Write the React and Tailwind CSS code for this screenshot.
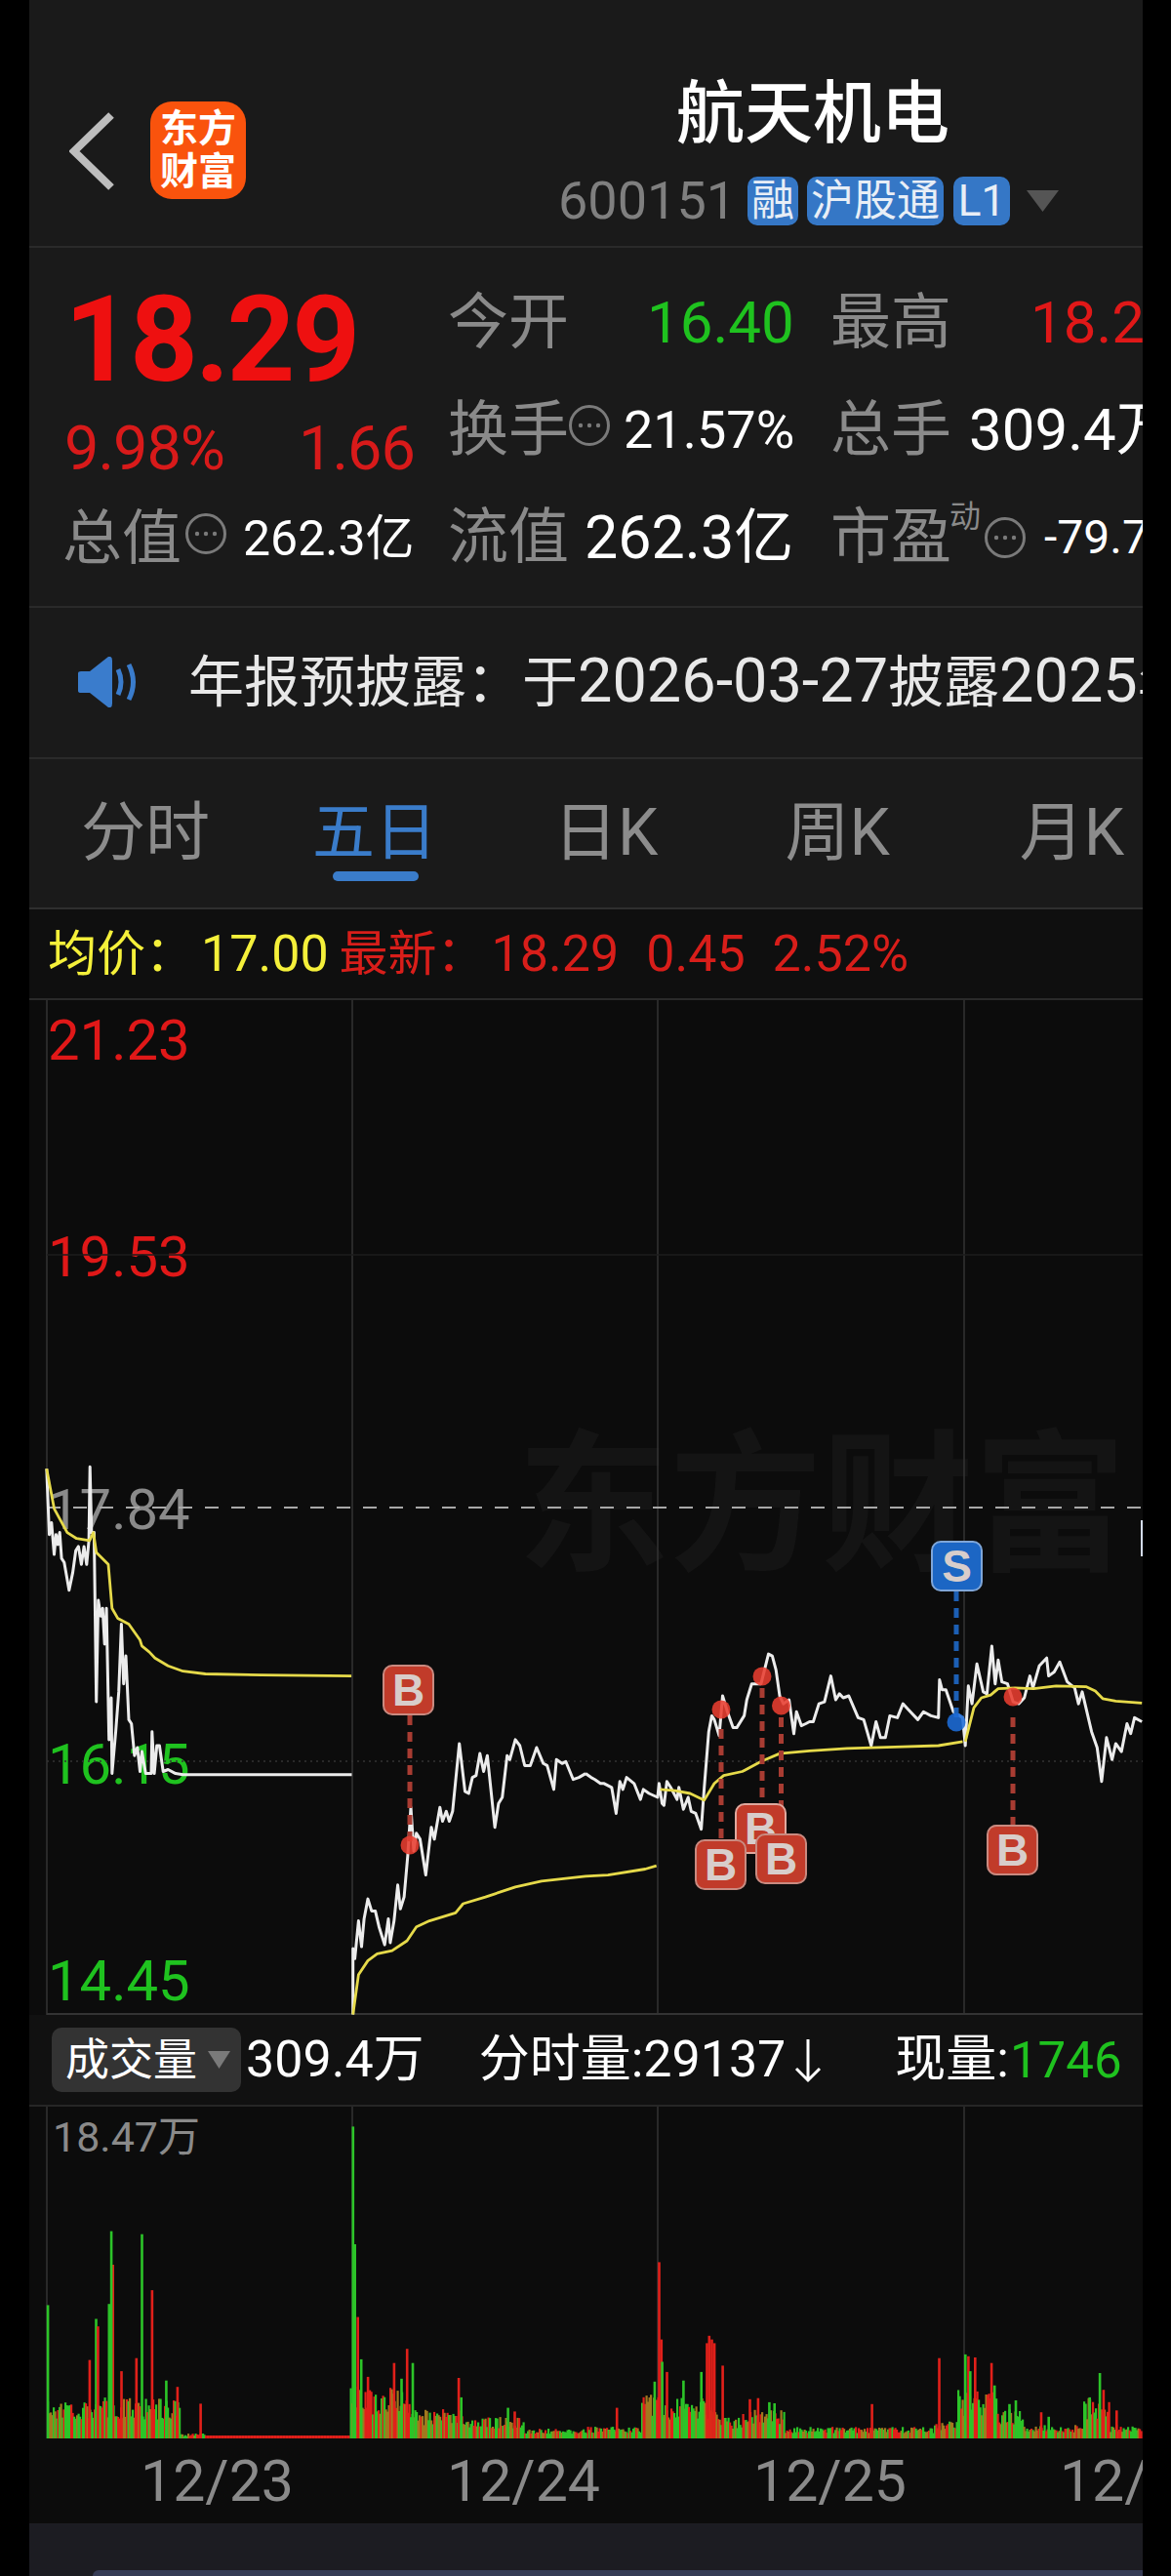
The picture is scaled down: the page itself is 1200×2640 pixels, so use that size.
const z3 = (pts) => pts.map(([x, y]) => `${(x / 2.613).toFixed(1)},${(1440 + y / 2.45).toFixed(1)}`).join(" ");
const z4 = (pts) => pts.map(([x, y]) => `${(600 + x / 2.613).toFixed(1)},${(1440 + y / 2.45).toFixed(1)}`).join(" ");

const white1 = z3([[125,160],[132,325],[138,295],[145,375],[150,325],[155,350],[160,320],[165,385],[172,395],[185,465],[195,420],[203,365],[210,355],[218,400],[225,355],[232,400],[238,340],[241,155],[245,320],[252,320],[258,745],[263,490],[270,530],[275,510],[280,600],[285,510],[292,840],[298,735],[300,925],[310,820],[318,720],[325,550],[331,700],[337,630],[345,790],[352,800],[360,880],[368,860],[375,920],[380,870],[390,925],[405,925],[407,820],[413,925],[420,855],[427,855],[437,920],[450,915],[470,925],[490,928],[942,928]]);
const white2 = z3([[945,1530],[945,1365],[950,1390],[960,1295],[968,1360],[975,1290],[985,1240],[995,1270],[1005,1270],[1015,1310],[1030,1355],[1040,1290],[1045,1350],[1055,1295],[1065,1205],[1072,1265],[1082,1235],[1092,1130],[1100,1010],[1108,1120],[1115,1075],[1125,1090],[1140,1180],[1155,1060],[1163,1090],[1178,1010],[1185,1045],[1195,1020],[1203,1045],[1212,1020],[1230,850],[1245,970],[1255,975],[1265,935],[1275,930],[1285,875],[1295,920],[1305,880],[1325,1060],[1335,1000],[1345,985],[1358,880],[1365,890],[1380,840],[1392,855],[1405,905],[1420,905],[1437,860],[1455,900],[1465,905],[1483,965],[1490,890],[1505,900],[1515,895],[1535,940],[1550,935],[1568,925]]);
const white3 = z4([[0,925],[15,935],[25,940],[40,950],[50,950],[70,960],[82,1025],[92,945],[100,965],[110,935],[130,950],[147,990],[155,965],[170,975],[193,985],[197,950],[205,1000],[210,1005],[218,945],[228,960],[245,990],[250,960],[262,1015],[275,985],[283,1020],[295,1025],[310,1065],[318,960],[330,820],[338,780],[345,790],[358,830],[367,730],[380,770],[395,810],[405,810],[425,780],[432,740],[445,700],[470,700],[490,625],[500,630],[510,665],[520,730],[530,750],[545,740],[558,825],[565,770],[578,805],[590,800],[600,795],[610,795],[625,750],[640,745],[657,680],[670,740],[680,725],[690,735],[705,730],[730,785],[745,790],[765,855],[778,795],[790,835],[803,835],[815,780],[835,785],[850,750],[865,765],[890,790],[905,770],[925,780],[945,785],[948,690],[955,715],[965,715],[985,770],[1010,785],[1017,855],[1025,705],[1035,750],[1048,650],[1065,720],[1075,725],[1088,605],[1097,700],[1105,640],[1115,695],[1130,700],[1145,745],[1160,750],[1175,735],[1190,680],[1198,710],[1215,655],[1235,635],[1240,680],[1255,670],[1270,645],[1290,695],[1310,710],[1320,750],[1330,720],[1355,820],[1370,860],[1382,945],[1395,835],[1410,890],[1420,850],[1435,870],[1450,800],[1460,825],[1470,785],[1490,795]]);

const yellowLines = [
  z3([[125,160],[145,260],[180,320],[205,335],[240,340],[250,320],[258,370],[290,400],[300,510],[315,535],[345,550],[375,590],[380,605],[400,620],[415,635],[450,655],[490,668],[550,675],[700,678],[941,680]]),
  z3([[945,1530],[960,1430],[985,1395],[1010,1378],[1050,1370],[1090,1345],[1115,1310],[1150,1295],[1220,1275],[1240,1252],[1300,1235],[1380,1210],[1450,1195],[1568,1183]]),
  z4([[0,1183],[60,1180],[160,1165],[190,1157]]),
  z4([[200,965],[240,968],[280,975],[318,992],[345,950],[370,930],[420,920],[470,895],[520,875],[600,868],[700,862],[850,858],[945,855],[1010,845]]),
  z4([[1017,845],[1040,760],[1060,735],[1085,728],[1105,712],[1150,710],[1200,712],[1260,705],[1340,707],[1365,718],[1385,737],[1420,743],[1490,748]]),
];

const GREEN = "#2cc428";
const RED = "#e2201a";
const OLIVE = "#a2781e";
const BASE = 2499;
const envelope = [[184,42],[210,5],[358,3],[420,54],[474,30],[536,22],[600,10],[657,12],[684,46],[734,42],[760,22],[803,30],[956,12],[980,18],[1021,50],[1048,30],[1109,14],[1136,42],[1171,14]];
const spikes5 = [["g",128,843],["r",302,735],["g",298,645],["g",292,840],["g",257,880],["r",262,900],["g",380,653],["r",407,803],["r",240,990],["r",365,985],["r",325,1020],["g",445,1045],["r",475,1062],["r",537,1107],["g",945,365],["g",950,680],["r",958,875],["g",967,988],["r",985,1035],["r",1055,998],["r",1090,960],["g",1105,998],["g",1075,1040],["r",1228,1038],["g",1235,1090],["g",1360,1118],["r",1378,1128]];
const spikes6 = [["r",197,728],["r",203,935],["g",205,995],["g",185,1048],["r",218,1022],["g",262,1045],["g",310,1022],["r",325,945],["r",331,925],["r",338,935],["r",345,945],["r",367,1005],["r",84,1118],["r",440,1095],["r",462,1092],["g",492,1103],["g",506,1106],["r",767,1108],["r",947,985],["g",1017,975],["r",1025,980],["r",1043,983],["g",1030,1020],["r",1087,998],["g",1095,1058],["g",1135,1108],["g",1152,1098],["r",1220,1130],["g",1240,1142],["g",1350,1090],["g",1377,1025],["r",1387,1070],["r",1422,1125]];

function buildBars() {
  let seed = 17;
  const rnd = () => {
    seed = (seed * 1664525 + 1013904223) % 4294967296;
    return seed / 4294967296;
  };
  const bars = [];
  for (let x = 48; x < 1170; x += 1.5) {
    const e = envelope.find((p) => x < p[0]) || envelope[envelope.length - 1];
    if (x >= 210 && x < 358) {
      bars.push({ x, h: 3, c: RED, w: 1.8 });
      continue;
    }
    const r = rnd();
    bars.push({ x, h: e[1] * (0.45 + 0.55 * rnd()), c: r < 0.42 ? GREEN : r < 0.72 ? OLIVE : RED, w: 2.2 });
  }
  spikes5.forEach(([k, zx, top]) => bars.push({ x: zx / 2.613 - 1.2, h: (1200 - top) / 2.613, c: k === "g" ? GREEN : RED, w: 2.6 }));
  spikes6.forEach(([k, zx, top]) => bars.push({ x: 600 + zx / 2.613 - 1.2, h: (1200 - top) / 2.613, c: k === "g" ? GREEN : RED, w: 2.6 }));
  return bars;
}
const bars = buildBars();

function MoreIcon({ className }) {
  return (
    <svg viewBox="0 0 44 44" className={className} fill="none">
      <circle cx="22" cy="22" r="19.5" stroke="#7a7a7a" strokeWidth="3" />
      <circle cx="13" cy="22" r="2.2" fill="#7a7a7a" />
      <circle cx="22" cy="22" r="2.2" fill="#7a7a7a" />
      <circle cx="31" cy="22" r="2.2" fill="#7a7a7a" />
    </svg>
  );
}

function Tag({ className, children }) {
  return (
    <div className={`h-[50px] rounded-[10px] bg-[#3577c6] text-[#e8eef6] text-[44px] leading-none flex items-center justify-center ${className}`}>
      {children}
    </div>
  );
}

function Header() {
  return (
    <div className="h-[252px] flex items-start border-b-2 border-[#2a2a2a] box-content">
      <svg viewBox="0 0 46 80" className="w-[46px] h-[80px] ml-[41px] mt-[115px]" fill="none">
        <path d="M43 3 L5 40 L43 77" stroke="#bdbdbd" strokeWidth="8" />
      </svg>
      <div className="w-[98px] h-[100px] ml-[37px] mt-[104px] rounded-[22px] bg-[#f9530d] flex flex-col items-center justify-center text-white text-[39px] leading-[44px] font-bold">
        <span>东方</span>
        <span>财富</span>
      </div>
      <div className="ml-[322px] pt-[83px] flex flex-col">
        <div className="ml-[119px] text-[70px] leading-[68px] text-white font-medium whitespace-nowrap">航天机电</div>
        <div className="mt-[28px] flex items-center">
          <span className="w-[176px] text-[54px] leading-none text-[#7f7f7f] -ml-[2px]">600151</span>
          <Tag className="ml-[18px] w-[52px]">融</Tag>
          <Tag className="ml-[9px] w-[140px]">沪股通</Tag>
          <Tag className="ml-[10px] w-[58px]">L1</Tag>
          <svg viewBox="0 0 33 22" className="w-[33px] h-[22px] ml-[17px]">
            <path d="M0 0 H33 L16.5 22 Z" fill="#555" />
          </svg>
        </div>
      </div>
    </div>
  );
}

function Stats() {
  const label = "text-[62px] leading-none text-[#8a8a8a] w-[120px] shrink-0 whitespace-nowrap";
  const row = "h-[110px] flex items-center whitespace-nowrap";
  return (
    <div className="h-[367px] flex border-b-2 border-[#2a2a2a] box-content overflow-hidden">
      <div className="w-[429px] shrink-0 flex flex-col pl-[36px]">
        <div className="mt-[32px] h-[126px] flex items-center text-[122px] leading-none font-bold text-[#ee1010] tracking-[-3px]">18.29</div>
        <div className="mt-[17px] h-[60px] flex items-center text-[63px] leading-none text-[#d81a1a] tracking-[-1px]">
          <span className="w-[240px]">9.98%</span>
          <span>1.66</span>
        </div>
        <div className="mt-[33px] h-[60px] flex items-center whitespace-nowrap">
          <span className="text-[61px] leading-none text-[#8a8a8a] -ml-[2px]">总值</span>
          <MoreIcon className="w-[44px] h-[44px] ml-[3px] -mt-[10px]" />
          <span className="ml-[16px] text-[50px] leading-none text-white">262.3亿</span>
        </div>
      </div>
      <div className="w-[392px] shrink-0 pt-[22px]">
        <div className={row}>
          <span className={label}>今开</span>
          <span className="ml-[84px] w-[149px] text-right text-[60px] leading-none text-[#1fc21f]">16.40</span>
        </div>
        <div className={row}>
          <span className={label}>换手</span>
          <MoreIcon className="w-[44px] h-[44px] ml-[3px] -mt-[10px] shrink-0" />
          <span className="ml-[13px] text-[54px] leading-none text-white">21.57%</span>
        </div>
        <div className={row}>
          <span className={label}>流值</span>
          <span className="ml-[20px] text-[61px] leading-none text-white">262.3亿</span>
        </div>
      </div>
      <div className="flex-1 pt-[22px]">
        <div className={row}>
          <span className={label}>最高</span>
          <span className="ml-[85px] text-[60px] leading-none text-[#e01818]">18.29</span>
        </div>
        <div className={row}>
          <span className={label}>总手</span>
          <span className="ml-[22px] text-[60px] leading-none text-white">309.4万</span>
        </div>
        <div className={row}>
          <span className={label}>市盈</span>
          <span className="ml-[2px] -mt-[44px] text-[32px] leading-none text-[#8a8a8a]">动</span>
          <MoreIcon className="w-[44px] h-[44px] ml-[3px] shrink-0" />
          <span className="ml-[18px] text-[48px] leading-none text-white">-79.78</span>
        </div>
      </div>
    </div>
  );
}

function Notice() {
  return (
    <div className="h-[153px] flex items-center border-b-2 border-[#2a2a2a] box-content overflow-hidden whitespace-nowrap">
      <svg viewBox="0 0 63 52" className="ml-[50px] w-[63px] h-[52px] shrink-0 -mt-[2px]" fill="#3a7ccc">
        <path d="M0 17 Q0 15 3 15 H12 L31 0 Q35 -1 35 4 V48 Q35 53 31 52 L12 37 H3 Q0 37 0 35 Z" />
        <path d="M41 13 Q47 26 41 39" fill="none" stroke="#3a7ccc" strokeWidth="5" />
        <path d="M52 8 Q61 26 52 44" fill="none" stroke="#3a7ccc" strokeWidth="5" />
      </svg>
      <span className="ml-[50px] -mt-[4px] text-[57px] leading-none text-[#e8e8e8]">
        年报预披露：于<span className="text-[63px]">2026-03-27</span>披露<span className="text-[63px]">2025</span>年报
      </span>
    </div>
  );
}

function Tabs() {
  const tab = "text-[66px] leading-none text-[#8c8c8c] whitespace-nowrap";
  return (
    <div className="h-[152px] flex items-center border-b-2 border-[#2f2f2f] box-content overflow-hidden">
      <span className={`${tab} ml-[53px]`}>分时</span>
      <span className="ml-[105px] relative text-[64px] leading-none text-[#3a7cca] whitespace-nowrap">
        五日
        <span className="absolute left-[21px] top-[71px] w-[88px] h-[10px] rounded-full bg-[#3a7cca]"></span>
      </span>
      <span className={`${tab} ml-[119px]`}>日K</span>
      <span className={`${tab} ml-[130px]`}>周K</span>
      <span className={`${tab} ml-[133px]`}>月K</span>
    </div>
  );
}

function Legend() {
  const num = "text-[52px]";
  return (
    <div className="h-[91px] flex items-center bg-[#0f0f0f] border-b-2 border-[#2a2a2a] box-content text-[50px] leading-none whitespace-nowrap overflow-hidden">
      <span className="ml-[19px] text-[#f5f03a]">均价：</span>
      <span className={`ml-[7px] text-[#f5f03a] ${num}`}>17.00</span>
      <span className="ml-[11px] text-[#d81e1a]">最新：</span>
      <span className={`ml-[6px] text-[#d81e1a] ${num}`}>18.29</span>
      <span className={`ml-[28px] text-[#d81e1a] ${num}`}>0.45</span>
      <span className={`ml-[28px] text-[#d81e1a] ${num}`}>2.52%</span>
    </div>
  );
}

function Badge({ className, children }) {
  return (
    <div className={`absolute w-[53px] h-[52px] rounded-[10px] border-2 flex items-center justify-center text-[46px] leading-none font-bold text-[#d8cdcb] [font-family:'Liberation_Sans',sans-serif] ${className}`}>
      {children}
    </div>
  );
}

function PriceChart() {
  const grid = [48, 361, 674, 988];
  const axis = "absolute left-[19px] text-[58px] leading-none";
  const dashes = [
    [420, 1758, 1890, "#a83c32"],
    [739, 1772, 1890, "#a83c32"],
    [781, 1730, 1850, "#a83c32"],
    [800.5, 1760, 1855, "#a83c32"],
    [1038, 1760, 1870, "#a83c32"],
    [980, 1631, 1765, "#1c5fb4"],
  ];
  const dots = [
    [420, 1891, "#e83e30"],
    [739, 1752, "#e83e30"],
    [781, 1718, "#e83e30"],
    [800.5, 1748, "#e83e30"],
    [1038, 1739, "#e83e30"],
    [980, 1765, "#1c6cd8"],
  ];
  return (
    <div className="relative h-[1040px] bg-[#0c0c0c] overflow-hidden">
      <div className="absolute left-[500px] top-[441px] text-[156px] leading-none font-bold text-[#141414] whitespace-nowrap">东方财富</div>
      <div className={`${axis} top-[12px] text-[#e01818]`}>21.23</div>
      <div className={`${axis} top-[234px] text-[#e01818]`}>19.53</div>
      <div className={`${axis} top-[493px] text-[#8a8a8a]`}>17.84</div>
      <div className={`${axis} top-[754px] text-[#1fc21f]`}>16.15</div>
      <div className={`${axis} top-[976px] text-[#1fc21f]`}>14.45</div>
      <svg viewBox="30 1025 1141 1040" className="absolute inset-0 w-[1141px] h-[1040px]" fill="none">
        {grid.map((x) => (
          <line key={x} x1={x} x2={x} y1="1025" y2="2065" stroke="#333" strokeWidth="1.5" />
        ))}
        <line x1="48" x2="1171" y1="1286" y2="1286" stroke="#1c1c1c" strokeWidth="1.5" />
        <line x1="48" x2="1171" y1="1805" y2="1805" stroke="#333" strokeWidth="1.5" strokeDasharray="2 4" />
        <line x1="48" x2="1171" y1="1545" y2="1545" stroke="#a8a8a8" strokeWidth="2" strokeDasharray="14 13" />
        <line x1="48" x2="1171" y1="2064" y2="2064" stroke="#333" strokeWidth="2" />
        {[white1, white2, white3].map((p, i) => (
          <polyline key={i} points={p} stroke="#ececec" strokeWidth="3" strokeLinejoin="round" />
        ))}
        {yellowLines.map((p, i) => (
          <polyline key={i} points={p} stroke="#e6da4a" strokeWidth="2.8" strokeLinejoin="round" />
        ))}
        {dashes.map(([x, a, b, c], i) => (
          <line key={i} x1={x} x2={x} y1={a} y2={b} stroke={c} strokeWidth="5" strokeDasharray="10 7" />
        ))}
        {dots.map(([x, y, c], i) => (
          <circle key={i} cx={x} cy={y} r="9.5" fill={c} fillOpacity="0.88" />
        ))}
        <rect x="1169" y="1558" width="2" height="37" fill="#d4dcec" />
      </svg>
      <Badge className="left-[362px] top-[681px] bg-[#c13b2a] border-[#c98a80]">B</Badge>
      <Badge className="left-[723px] top-[823px] bg-[#c13b2a] border-[#e0a89e]">B</Badge>
      <Badge className="left-[682px] top-[860px] bg-[#c13b2a] border-[#c98a80]">B</Badge>
      <Badge className="left-[744px] top-[854px] bg-[#c13b2a] border-[#c98a80]">B</Badge>
      <Badge className="left-[981px] top-[845px] bg-[#c13b2a] border-[#c98a80]">B</Badge>
      <Badge className="left-[924px] top-[554px] bg-[#1c66c4] border-[#7fa6d8]">S</Badge>
    </div>
  );
}

function VolumeHeader() {
  return (
    <div className="h-[92px] flex items-center bg-[#111111] border-b-2 border-[#262626] box-content text-[52px] leading-none text-white whitespace-nowrap overflow-hidden">
      <div className="ml-[23px] w-[194px] h-[66px] rounded-[10px] bg-[#333333] flex items-center pl-[14px] shrink-0">
        <span className="text-[45px] leading-none">成交量</span>
        <svg viewBox="0 0 23 18" className="w-[23px] h-[18px] ml-[11px]">
          <path d="M0 0 H23 L11.5 18 Z" fill="#7a7a7a" />
        </svg>
      </div>
      <span className="ml-[5px]">309.4万</span>
      <span className="ml-[56px]">分时量:29137</span>
      <svg viewBox="0 0 30 50" className="ml-[8px] w-[30px] h-[50px] shrink-0" fill="none">
        <path d="M15 4 V46 M3 34 L15 46 L27 34" stroke="#ffffff" strokeWidth="3" />
      </svg>
      <span className="ml-[74px]">现量:</span>
      <span className="ml-[1px] text-[#1fc21f] text-[51px]">1746</span>
    </div>
  );
}

function VolumeChart() {
  const grid = [48, 361, 674, 988];
  return (
    <div className="relative h-[340px] bg-[#0c0c0c] overflow-hidden">
      <svg viewBox="30 2159 1141 340" className="absolute inset-0 w-[1141px] h-[340px]">
        {grid.map((x) => (
          <line key={x} x1={x} x2={x} y1="2159" y2="2499" stroke="#333" strokeWidth="1.5" />
        ))}
        {bars.map((b, i) => (
          <rect key={i} x={b.x.toFixed(1)} y={(BASE - b.h).toFixed(1)} width={b.w} height={b.h.toFixed(1)} fill={b.c} />
        ))}
      </svg>
      <div className="absolute left-[24px] top-[10px] text-[43px] leading-none text-[#8a8a8a]">18.47万</div>
    </div>
  );
}

function Dates() {
  const d = "text-[59px] leading-none text-[#8a8a8a] whitespace-nowrap";
  return (
    <div className="h-[87px] flex items-center bg-[#0c0c0c] overflow-hidden">
      <span className={`${d} ml-[114px]`}>12/23</span>
      <span className={`${d} ml-[157px]`}>12/24</span>
      <span className={`${d} ml-[157px]`}>12/25</span>
      <span className={`${d} ml-[157px]`}>12/26</span>
    </div>
  );
}

export default function App() {
  return (
    <div className="w-[1200px] h-[2640px] bg-black overflow-hidden [font-family:Roboto,'Noto_Sans_CJK_SC',sans-serif]">
      <div className="ml-[30px] w-[1141px] h-[2640px] bg-[#1a1a1a] overflow-hidden">
        <Header />
        <Stats />
        <Notice />
        <Tabs />
        <Legend />
        <PriceChart />
        <VolumeHeader />
        <VolumeChart />
        <Dates />
        <div className="h-[54px] bg-[#1c1c22] pl-[65px] pt-[48px]">
          <div className="h-[6px] rounded-tl-[24px] bg-[#363b55]"></div>
        </div>
      </div>
    </div>
  );
}
